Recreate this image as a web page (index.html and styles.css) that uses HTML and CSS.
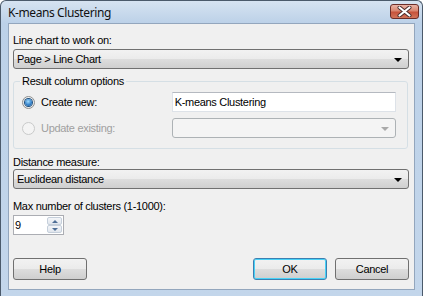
FILE: index.html
```html
<!DOCTYPE html>
<html>
<head>
<meta charset="utf-8">
<link rel="stylesheet" href="styles.css">
</head>
<body>
<div class="window">
  <div class="titlebar">
    <span class="title">K-means Clustering</span>
    <div class="close">
      <svg width="15" height="11" viewBox="0 0 15 11">
        <path d="M2.5 1.5 L12.5 9.5 M12.5 1.5 L2.5 9.5" stroke="#4a2b2b" stroke-width="4" stroke-linecap="round"/>
        <path d="M2.5 1.5 L12.5 9.5 M12.5 1.5 L2.5 9.5" stroke="#ffffff" stroke-width="2.2" stroke-linecap="round"/>
      </svg>
    </div>
  </div>
  <div class="client">
    <div class="label first">Line chart to work on:</div>
    <div class="combo">
      <span>Page &gt; Line Chart</span>
      <span class="arrow"></span>
    </div>
    <fieldset class="group">
      <legend>Result column options</legend>
      <div class="row">
        <span class="radio checked"><span class="dot"></span></span>
        <span class="rlabel">Create new:</span>
        <div class="textbox">K-means Clustering</div>
      </div>
      <div class="row second">
        <span class="radio disabled"></span>
        <span class="rlabel disabled-text">Update existing:</span>
        <div class="combo dis"><span></span><span class="arrow"></span></div>
      </div>
    </fieldset>
    <div class="label dist">Distance measure:</div>
    <div class="combo">
      <span>Euclidean distance</span>
      <span class="arrow"></span>
    </div>
    <div class="label max">Max number of clusters (1-1000):</div>
    <div class="spinner">
      <span class="val">9</span>
      <div class="spin">
        <div class="sbtn"><span class="up"></span></div>
        <div class="sbtn"><span class="down"></span></div>
      </div>
    </div>
    <div class="buttons">
      <div class="btn">Help</div>
      <div class="right">
        <div class="btn default">OK</div>
        <div class="btn">Cancel</div>
      </div>
    </div>
  </div>
</div>
</body>
</html>
```
FILE: styles.css
```css
html, body {
  margin: 0;
  padding: 0;
  background: #ffffff;
}
.window {
  width: 423px;
  height: 296px;
  box-sizing: border-box;
  border: 1px solid #4b5a6b;
  border-bottom: none;
  border-radius: 6px 6px 0 0;
  background: linear-gradient(#d6e3f1, #bcd1e8 22px, #c3d6eb);
  display: flex;
  flex-direction: column;
  font-family: "Liberation Sans", Arial, sans-serif;
  font-size: 11px;
  letter-spacing: -0.3px;
  color: #000;
  overflow: hidden;
}
.titlebar {
  height: 22px;
  display: flex;
  align-items: flex-start;
  justify-content: space-between;
  flex-shrink: 0;
}
.title {
  font-family: "Noto Sans", "Open Sans", sans-serif;
  font-size: 12px;
  letter-spacing: -0.4px;
  line-height: 16px;
  margin: 4px 0 0 7px;
  color: #111;
}
.close {
  width: 29px;
  height: 15px;
  margin: 3px 3px 0 0;
  box-sizing: border-box;
  border: 1px solid #6b2d28;
  border-radius: 3px;
  background: linear-gradient(#eab3a6, #d98670 45%, #c7533c 55%, #d2745a);
  display: flex;
  align-items: center;
  justify-content: center;
}
.close svg { display: block; }
.client {
  flex: 1;
  margin: 0 7px 6px 7px;
  background: #f0f0f0;
  border: 1px solid #93a6bd;
  box-sizing: border-box;
  display: flex;
  flex-direction: column;
  padding: 10px 5px 0 4px;
}
.label {
  line-height: 13px;
  height: 13px;
  white-space: nowrap;
}
.combo {
  height: 20px;
  box-sizing: border-box;
  margin-top: 2px;
  border: 1px solid #707070;
  border-radius: 3px;
  background: linear-gradient(#f2f2f2, #ebebeb 50%, #dddddd 51%, #cfcfcf);
  display: flex;
  align-items: center;
  justify-content: space-between;
  padding: 0 6px 0 3px;
  line-height: 13px;
}
.arrow {
  width: 0;
  height: 0;
  border-left: 4px solid transparent;
  border-right: 4px solid transparent;
  border-top: 4px solid #000;
  margin-top: 1px;
}
.combo.dis {
  margin-top: 0;
  width: 225px;
  border-color: #adb2b5;
  background: #f4f4f4;
}
.combo.dis .arrow {
  border-top-color: #a9a9a9;
}
.group {
  margin: 6px 1px 0 0;
  padding: 4px 11px 10px 8px;
  border: 1px solid #d5dfe5;
  border-radius: 3px;
  min-width: 0;
}
.group legend {
  padding: 0 2px;
  margin-left: -2px;
  line-height: 13px;
  height: 13px;
  font-size: 11px;
}
.row {
  display: flex;
  align-items: center;
  height: 20px;
}
.row.second { margin-top: 6px; }
.radio {
  width: 13px;
  height: 13px;
  box-sizing: border-box;
  border-radius: 50%;
  border: 1px solid #8e8f8f;
  background: radial-gradient(circle at 50% 40%, #ffffff, #e0e0e0);
  display: flex;
  align-items: center;
  justify-content: center;
  flex-shrink: 0;
}
.radio .dot {
  width: 7px;
  height: 7px;
  border-radius: 50%;
  background: radial-gradient(circle at 45% 35%, #9fdcff, #2f7cc6 60%, #145a9c);
  box-shadow: 0 0 0 1px #1d4f7d;
}
.radio.disabled {
  border-color: #c9caca;
  background: #f4f4f4;
}
.rlabel {
  margin-left: 6px;
  width: 131px;
  white-space: nowrap;
  line-height: 13px;
}
.disabled-text { color: #a0a0a0; }
.textbox {
  width: 225px;
  height: 20px;
  box-sizing: border-box;
  background: #fff;
  border: 1px solid #dde2e8;
  border-top-color: #b5b9c0;
  padding: 0 2px;
  line-height: 18px;
  white-space: nowrap;
}
.dist { margin-top: 7px; }
.dist + .combo { margin-top: 0; }
.max { margin-top: 11px; }
.spinner {
  margin-top: 2px;
  width: 51px;
  height: 20px;
  box-sizing: border-box;
  background: #fff;
  border: 1px solid #abadb3;
  display: flex;
  justify-content: space-between;
  padding: 1px;
}
.val {
  line-height: 16px;
  padding-left: 0;
}
.spin {
  width: 15px;
  display: flex;
  flex-direction: column;
  gap: 0;
}
.sbtn {
  flex: 1;
  box-sizing: border-box;
  border: 1px solid #c5cfdb;
  border-radius: 2px;
  background: linear-gradient(#f4f6f9, #e1e6ed);
  display: flex;
  align-items: center;
  justify-content: center;
}
.up {
  width: 0; height: 0;
  border-left: 3px solid transparent;
  border-right: 3px solid transparent;
  border-bottom: 3px solid #4f6e96;
}
.down {
  width: 0; height: 0;
  border-left: 3px solid transparent;
  border-right: 3px solid transparent;
  border-top: 3px solid #4f6e96;
}
.buttons {
  margin-top: 23px;
  display: flex;
  justify-content: space-between;
}
.right {
  display: flex;
  gap: 8px;
  margin-right: 0;
}
.btn {
  width: 74px;
  height: 22px;
  box-sizing: border-box;
  border: 1px solid #707070;
  border-radius: 3px;
  background: linear-gradient(#f2f2f2, #ebebeb 50%, #dddddd 51%, #cfcfcf);
  display: flex;
  align-items: center;
  justify-content: center;
  line-height: 13px;
}
.btn.default {
  border-color: #3c7fb1;
  box-shadow: inset 0 0 0 1px #48d2f7;
}
```
